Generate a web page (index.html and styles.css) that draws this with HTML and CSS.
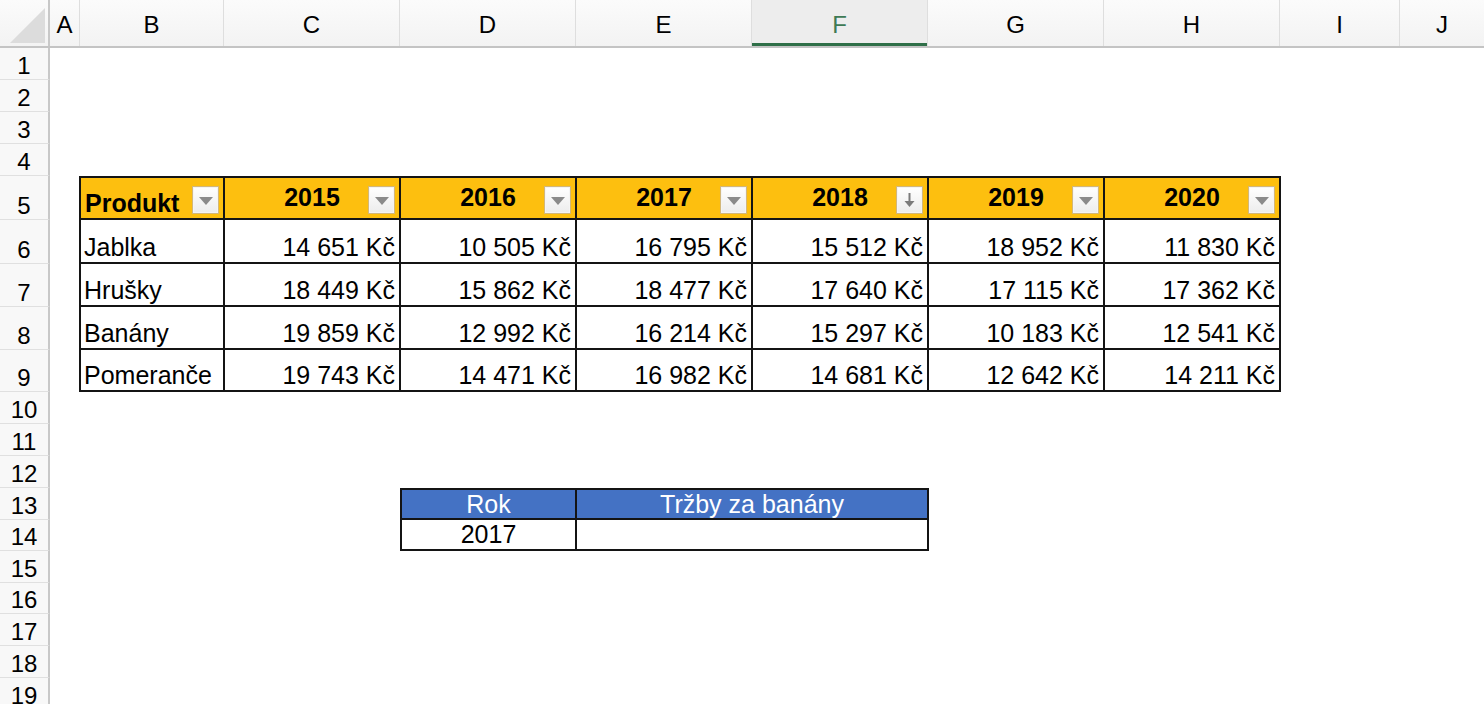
FILE: index.html
```html
<!DOCTYPE html>
<html lang="cs">
<head>
<meta charset="utf-8">
<title>Tabulka</title>
<link rel="stylesheet" href="styles.css">
</head>
<body>
<div class="sheet">
  <div class="colhead">
    <div class="corner"><span class="tri"></span></div>
    <div class="ch wA">A</div>
    <div class="ch wB">B</div>
    <div class="ch wC">C</div>
    <div class="ch wC">D</div>
    <div class="ch wC">E</div>
    <div class="ch wC sel">F</div>
    <div class="ch wC">G</div>
    <div class="ch wC">H</div>
    <div class="ch wI">I</div>
    <div class="ch wJ">J</div>
  </div>

  <div class="row h32"><div class="rh">1</div></div>
  <div class="row h32"><div class="rh">2</div></div>
  <div class="row h32"><div class="rh">3</div></div>
  <div class="row h32"><div class="rh">4</div></div>

  <div class="row h44 top">
    <div class="rh">5</div><div class="c cA"></div>
    <div class="c cB th left">Produkt<span class="flt"><span class="dd"></span></span></div>
    <div class="c cC th">2015<span class="flt"><span class="dd"></span></span></div>
    <div class="c cC th">2016<span class="flt"><span class="dd"></span></span></div>
    <div class="c cC th">2017<span class="flt"><span class="dd"></span></span></div>
    <div class="c cC th">2018<span class="flt"><svg class="sort" width="27" height="28" viewBox="0 0 27 28"><line x1="13.5" y1="7" x2="13.5" y2="16" stroke="#7b7b7b" stroke-width="2"/><polygon points="8.5,15 18.5,15 13.5,21" fill="#7b7b7b"/></svg></span></div>
    <div class="c cC th">2019<span class="flt"><span class="dd"></span></span></div>
    <div class="c cC th">2020<span class="flt"><span class="dd"></span></span></div>
  </div>
  <div class="row h44">
    <div class="rh">6</div><div class="c cA"></div>
    <div class="c cB td txt">Jablka</div>
    <div class="c cC td">14 651 Kč</div>
    <div class="c cC td">10 505 Kč</div>
    <div class="c cC td">16 795 Kč</div>
    <div class="c cC td">15 512 Kč</div>
    <div class="c cC td">18 952 Kč</div>
    <div class="c cC td">11 830 Kč</div>
  </div>
  <div class="row h43">
    <div class="rh">7</div><div class="c cA"></div>
    <div class="c cB td txt">Hrušky</div>
    <div class="c cC td">18 449 Kč</div>
    <div class="c cC td">15 862 Kč</div>
    <div class="c cC td">18 477 Kč</div>
    <div class="c cC td">17 640 Kč</div>
    <div class="c cC td">17 115 Kč</div>
    <div class="c cC td">17 362 Kč</div>
  </div>
  <div class="row h43">
    <div class="rh">8</div><div class="c cA"></div>
    <div class="c cB td txt">Banány</div>
    <div class="c cC td">19 859 Kč</div>
    <div class="c cC td">12 992 Kč</div>
    <div class="c cC td">16 214 Kč</div>
    <div class="c cC td">15 297 Kč</div>
    <div class="c cC td">10 183 Kč</div>
    <div class="c cC td">12 541 Kč</div>
  </div>
  <div class="row h42">
    <div class="rh">9</div><div class="c cA"></div>
    <div class="c cB td txt">Pomeranče</div>
    <div class="c cC td">19 743 Kč</div>
    <div class="c cC td">14 471 Kč</div>
    <div class="c cC td">16 982 Kč</div>
    <div class="c cC td">14 681 Kč</div>
    <div class="c cC td">12 642 Kč</div>
    <div class="c cC td">14 211 Kč</div>
  </div>

  <div class="row h32"><div class="rh">10</div></div>
  <div class="row h32"><div class="rh">11</div></div>
  <div class="row h32"><div class="rh">12</div></div>
  <div class="row h32 top">
    <div class="rh">13</div><div class="c cA"></div><div class="c cBs"></div><div class="c cCs"></div>
    <div class="c cC bh first">Rok</div>
    <div class="c cWide bh">Tržby za banány</div>
  </div>
  <div class="row h31">
    <div class="rh">14</div><div class="c cA"></div><div class="c cBs"></div><div class="c cCs"></div>
    <div class="c cC bd first">2017</div>
    <div class="c cWide bd"></div>
  </div>
  <div class="row h32"><div class="rh">15</div></div>
  <div class="row h31"><div class="rh">16</div></div>
  <div class="row h32"><div class="rh">17</div></div>
  <div class="row h32"><div class="rh">18</div></div>
  <div class="row h32"><div class="rh">19</div></div>
</div>
</body>
</html>
```

FILE: styles.css
```css
* { box-sizing: border-box; }
html, body { margin: 0; padding: 0; background: #ffffff; }
body {
  font-family: "Liberation Sans", Arial, sans-serif;
  color: #000;
  width: 1484px;
  height: 704px;
  overflow: hidden;
}
.sheet { width: 1484px; }

.colhead {
  display: flex;
  height: 48px;
  background: linear-gradient(#fbfbfb, #f3f3f3);
  border-bottom: 2px solid #c4c4c4;
}
.corner {
  width: 50px;
  flex: none;
  position: relative;
  border-right: 2px solid #c8c8c8;
}
.corner .tri {
  position: absolute;
  left: 10px;
  top: 8px;
  width: 0;
  height: 0;
  border-left: 35px solid transparent;
  border-bottom: 35px solid #dcdcdc;
}
.ch {
  flex: none;
  display: flex;
  align-items: center;
  justify-content: center;
  font-size: 24px;
  border-right: 1px solid #dedede;
  padding-top: 3px;
}
.ch.sel {
  background: #ededed;
  color: #3e7a55;
  box-shadow: inset 0 -3px 0 #2f6f48;
}
.wA { width: 30px; }
.wB { width: 144px; }
.wC { width: 176px; }
.wI { width: 120px; }
.wJ { width: 84px; border-right: none; }

.row { display: flex; }
.h31 { height: 31px; }
.h32 { height: 32px; }
.h42 { height: 42px; }
.h43 { height: 43px; }
.h44 { height: 44px; }

.rh {
  width: 50px;
  flex: none;
  height: 100%;
  background: #f8f8f8;
  border-right: 2px solid #c8c8c8;
  border-bottom: 1px solid #e0e0e0;
  font-size: 24px;
  line-height: 1;
  display: flex;
  align-items: flex-end;
  justify-content: center;
  padding-bottom: 1px;
}

.c {
  flex: none;
  height: 100%;
  font-size: 25px;
  display: flex;
  align-items: flex-end;
  white-space: nowrap;
}
.cA { width: 29px; }
.cB { width: 146px; }
.cC { width: 176px; }
.cBs { width: 146px; }
.cCs { width: 176px; }
.cWide { width: 352px; }

.th, .td {
  border-right: 2px solid #141414;
  border-bottom: 2px solid #141414;
}
.cB.th, .cB.td { border-left: 2px solid #141414; }
.top .th { border-top: 2px solid #141414; }

.th {
  position: relative;
  background: #fdbf0f;
  font-weight: bold;
  justify-content: center;
  align-items: center;
  padding-bottom: 2px;
}
.th.left {
  justify-content: flex-start;
  align-items: flex-end;
  padding-left: 4px;
  padding-bottom: 0;
}
.td {
  justify-content: flex-end;
  padding-right: 4px;
}
.td.txt {
  justify-content: flex-start;
  padding-left: 3px;
  padding-right: 0;
}

.flt {
  position: absolute;
  right: 4px;
  top: 8px;
  width: 27px;
  height: 28px;
  background: linear-gradient(#ffffff, #ececec);
  border: 1px solid #d2b77a;
  box-shadow: inset 0 0 0 1px #f4f4f4;
  display: flex;
  align-items: center;
  justify-content: center;
}
.dd {
  width: 0;
  height: 0;
  border-left: 7px solid transparent;
  border-right: 7px solid transparent;
  border-top: 8px solid #8a8a8a;
  margin-top: 1px;
}
.sort { display: block; position: absolute; left: -1px; top: -1px; }

.bh, .bd {
  justify-content: center;
  border-right: 2px solid #141414;
  border-bottom: 2px solid #141414;
}
.bh.first, .bd.first { border-left: 2px solid #141414; width: 177px; margin-left: -1px; }
.top .bh { border-top: 2px solid #141414; }
.bh {
  background: #4472c4;
  color: #ffffff;
  align-items: center;
}
.bd { background: #ffffff; }
```
